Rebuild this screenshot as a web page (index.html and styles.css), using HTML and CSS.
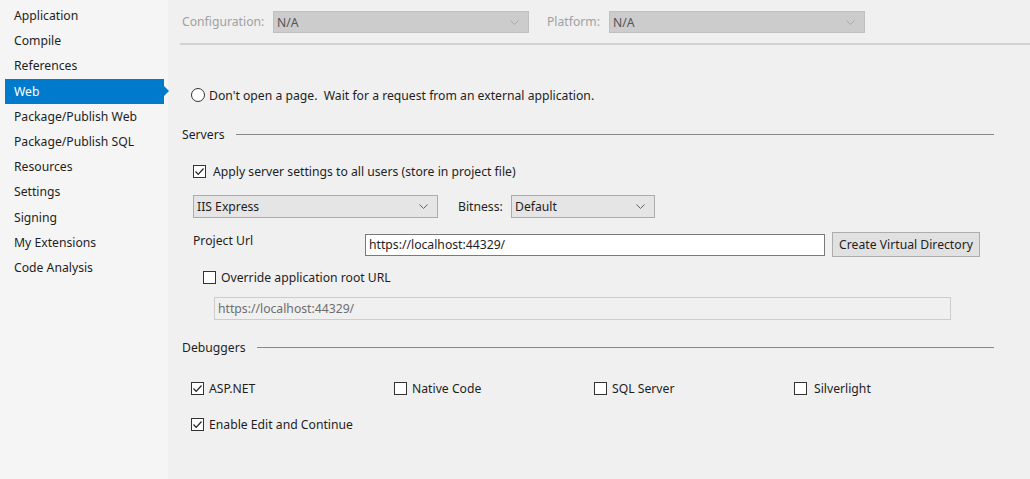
FILE: index.html
```html
<!DOCTYPE html>
<html>
<head>
<meta charset="utf-8">
<link rel="stylesheet" href="styles.css">
</head>
<body>
<div class="app">
  <nav class="sidebar">
    <div class="nav-item">Application</div>
    <div class="nav-item">Compile</div>
    <div class="nav-item">References</div>
    <div class="nav-item active">Web</div>
    <div class="nav-item">Package/Publish Web</div>
    <div class="nav-item">Package/Publish SQL</div>
    <div class="nav-item">Resources</div>
    <div class="nav-item">Settings</div>
    <div class="nav-item">Signing</div>
    <div class="nav-item">My Extensions</div>
    <div class="nav-item">Code Analysis</div>
  </nav>
  <main class="main">
    <div class="topbar">
      <span class="top-label">Configuration:</span>
      <div class="select select-disabled select-config"><span>N/A</span><svg class="chev" width="9" height="5" viewBox="0 0 9 5"><polyline points="0.5,0.5 4.5,4.5 8.5,0.5" fill="none" stroke="#a8a8a8" stroke-width="1"/></svg></div>
      <span class="top-label label-platform">Platform:</span>
      <div class="select select-disabled select-platform"><span>N/A</span><svg class="chev" width="9" height="5" viewBox="0 0 9 5"><polyline points="0.5,0.5 4.5,4.5 8.5,0.5" fill="none" stroke="#a8a8a8" stroke-width="1"/></svg></div>
    </div>
    <div class="content">
      <div class="radio-row"><span class="radio"></span><span>Don't open a page.&nbsp; Wait for a request from an external application.</span></div>

      <div class="group-head servers-head"><span>Servers</span><span class="rule"></span></div>

      <div class="check-row apply-row"><span class="check checked"><svg width="11" height="11" viewBox="0 0 11 11"><polyline points="1.5,5.5 4.2,8.3 9.5,2.5" fill="none" stroke="#222" stroke-width="1.2"/></svg></span><span>Apply server settings to all users (store in project file)</span></div>

      <div class="server-row">
        <div class="select select-server"><span>IIS Express</span><svg class="chev" width="9" height="5" viewBox="0 0 9 5"><polyline points="0.5,0.5 4.5,4.5 8.5,0.5" fill="none" stroke="#606060" stroke-width="1"/></svg></div>
        <span class="bitness-label">Bitness:</span>
        <div class="select select-bitness"><span>Default</span><svg class="chev" width="9" height="5" viewBox="0 0 9 5"><polyline points="0.5,0.5 4.5,4.5 8.5,0.5" fill="none" stroke="#606060" stroke-width="1"/></svg></div>
      </div>

      <div class="url-row">
        <span class="url-label">Project Url</span>
        <div class="text-input">https://localhost:44329/</div>
        <div class="button">Create Virtual Directory</div>
      </div>

      <div class="check-row override-row"><span class="check"></span><span>Override application root URL</span></div>

      <div class="text-input input-disabled">https://localhost:44329/</div>

      <div class="group-head debuggers-head"><span>Debuggers</span><span class="rule"></span></div>

      <div class="debug-row">
        <div class="check-row debug-item"><span class="check checked"><svg width="11" height="11" viewBox="0 0 11 11"><polyline points="1.5,5.5 4.2,8.3 9.5,2.5" fill="none" stroke="#222" stroke-width="1.2"/></svg></span><span>ASP.NET</span></div>
        <div class="check-row debug-item"><span class="check"></span><span>Native Code</span></div>
        <div class="check-row debug-item"><span class="check"></span><span>SQL Server</span></div>
        <div class="check-row debug-item"><span class="check"></span><span>Silverlight</span></div>
      </div>

      <div class="check-row edit-row"><span class="check checked"><svg width="11" height="11" viewBox="0 0 11 11"><polyline points="1.5,5.5 4.2,8.3 9.5,2.5" fill="none" stroke="#222" stroke-width="1.2"/></svg></span><span>Enable Edit and Continue</span></div>
    </div>
  </main>
</div>
</body>
</html>
```

FILE: styles.css
```css
* { box-sizing: border-box; }
html, body {
  margin: 0;
  padding: 0;
  width: 1030px;
  height: 479px;
  overflow: hidden;
}
body {
  font-family: "Noto Sans", "Open Sans", sans-serif;
  font-size: 12.2px;
  color: #1e1e1e;
  background: #f0f0f0;
}
.app {
  display: flex;
  height: 479px;
}
.sidebar {
  width: 168px;
  flex: none;
  background: #f5f5f5;
  padding-top: 3px;
}
.nav-item {
  position: relative;
  height: 25.2px;
  line-height: 25px;
  margin-left: 5px;
  width: 159px;
  padding-left: 9px;
  white-space: nowrap;
}
.nav-item.active {
  background: #007acc;
  color: #ffffff;
}
.nav-item.active::after {
  content: "";
  position: absolute;
  right: -5px;
  top: 7px;
  border-left: 5px solid #007acc;
  border-top: 5px solid transparent;
  border-bottom: 5px solid transparent;
}
.main {
  flex: 1;
  padding-left: 12px;
}
.topbar {
  height: 45px;
  border-bottom: 2px solid #d2d2d2;
  display: flex;
  align-items: flex-start;
  padding-top: 11px;
  padding-left: 2px;
}
.top-label {
  color: #a0a0a0;
  line-height: 22px;
  width: 91px;
}
.label-platform {
  width: 62px;
  margin-left: 18px;
}
.select {
  display: flex;
  align-items: center;
  justify-content: space-between;
  height: 23px;
  border: 1px solid #acacac;
  background: #e5e5e5;
  padding: 0 9px 0 3px;
}
.select .chev { flex: none; }
.select-disabled {
  background: #cccccc;
  border-color: #c0c0c0;
  color: #555555;
  height: 22px;
}
.select-config { width: 256px; }
.select-platform { width: 256px; }
.content {
  padding-top: 40px;
  padding-right: 42px;
}
.radio-row, .check-row {
  display: flex;
  align-items: center;
  height: 20px;
  white-space: nowrap;
}
.radio-row { margin-left: 11px; }
.radio {
  width: 14px;
  height: 14px;
  border: 1px solid #333333;
  border-radius: 50%;
  background: #ffffff;
  margin-right: 4px;
  flex: none;
}
.check {
  width: 13px;
  height: 13px;
  border: 1px solid #333333;
  background: #ffffff;
  flex: none;
  display: flex;
  align-items: center;
  justify-content: center;
  margin-right: 5px;
}
.group-head {
  display: flex;
  align-items: center;
  height: 20px;
  padding-left: 2px;
}
.group-head .rule {
  flex: 1;
  border-top: 1px solid #8a8a8a;
  margin-left: 11px;
}
.servers-head { margin-top: 19px; }
.apply-row { margin-top: 17px; margin-left: 13px; }
.apply-row .check { margin-right: 7px; }
.server-row {
  display: flex;
  align-items: center;
  margin-top: 14px;
  margin-left: 13px;
}
.select-server { width: 245px; }
.bitness-label { margin-left: 20px; width: 53px; }
.select-bitness { width: 144px; }
.url-row {
  display: flex;
  align-items: flex-start;
  margin-top: 14px;
  margin-left: 13px;
}
.url-label {
  width: 172px;
  line-height: 16px;
  margin-top: 1px;
}
.text-input {
  width: 460px;
  height: 22px;
  margin-top: 2px;
  background: #ffffff;
  border: 1px solid #7a7a7a;
  line-height: 20px;
  padding-left: 3px;
}
.button {
  margin-left: 7px;
  width: 148px;
  height: 25px;
  border: 1px solid #adadad;
  background: #e1e1e1;
  text-align: center;
  line-height: 23px;
}
.override-row { margin-top: 10px; margin-left: 23px; }
.input-disabled {
  margin-top: 10px;
  margin-left: 34px;
  width: 737px;
  height: 23px;
  background: #f0f0f0;
  border-color: #cccccc;
  color: #6d6d6d;
  line-height: 21px;
}
.debuggers-head { margin-top: 17px; }
.debug-row {
  display: grid;
  grid-template-columns: 203px 200px 200px 200px;
  margin-top: 21px;
  margin-left: 11px;
}
.debug-item:last-child .check { margin-right: 7px; }
.edit-row { margin-top: 16px; margin-left: 11px; }
```
